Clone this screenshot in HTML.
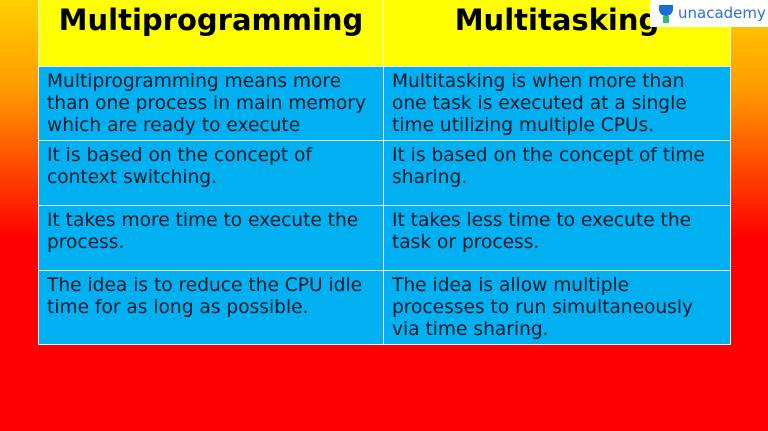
<!DOCTYPE html>
<html><head><style>
body{margin:0;width:768px;height:431px;overflow:hidden;font-family:"DejaVu Sans","Liberation Sans",sans-serif;
background:linear-gradient(180deg,#ffd000 0px,#ff9a00 90px,#ff3c00 180px,#ff0000 240px,#ff0000 431px);position:relative}
table{position:absolute;left:38px;top:-2px;width:693px;border-collapse:collapse;table-layout:fixed}
td{border:1.5px solid #e8f4ff;vertical-align:top;color:#0a1a2a;font-size:18.6px;line-height:22px;padding:4px 6px 0 8px;background:#00b0f0;box-sizing:border-box}
th{background:#ffff00;border:1.5px solid #e8f4ff;font-size:29px;font-weight:bold;height:68px;vertical-align:top;padding-top:4px;color:#000;box-sizing:border-box}
.logo{position:absolute;left:650px;top:0;width:118px;height:27px;background:#fff;}
.logo span{position:absolute;left:28px;top:4px;font-size:15px;color:#2f6fd6;font-family:"DejaVu Sans",sans-serif}
</style></head><body>
<table>
<tr><th style="width:345px">Multiprogramming</th><th>Multitasking</th></tr>
<tr><td style="height:74px">Multiprogramming means more than one process in main memory which are ready to execute</td><td>Multitasking is when more than one task is executed at a single time utilizing multiple CPUs.</td></tr>
<tr><td style="height:65px">It is based on the concept of context switching.</td><td>It is based on the concept of time sharing.</td></tr>
<tr><td style="height:65px">It takes more time to execute the process.</td><td>It takes less time to execute the task or process.</td></tr>
<tr><td style="height:74px">The idea is to reduce the CPU idle time for as long as possible.</td><td style="padding-right:20px">The idea is allow multiple processes to run simultaneously via time sharing.</td></tr>
</table>
<div class="logo"><svg width="20" height="22" style="position:absolute;left:7px;top:3px"><path d="M2 2 H16 V6 A7 7 0 0 1 2 6 Z" fill="#1a6fd6"/><rect x="6" y="13" width="6" height="7" fill="#2fbf71"/></svg><span>unacademy</span></div>
</body></html>
